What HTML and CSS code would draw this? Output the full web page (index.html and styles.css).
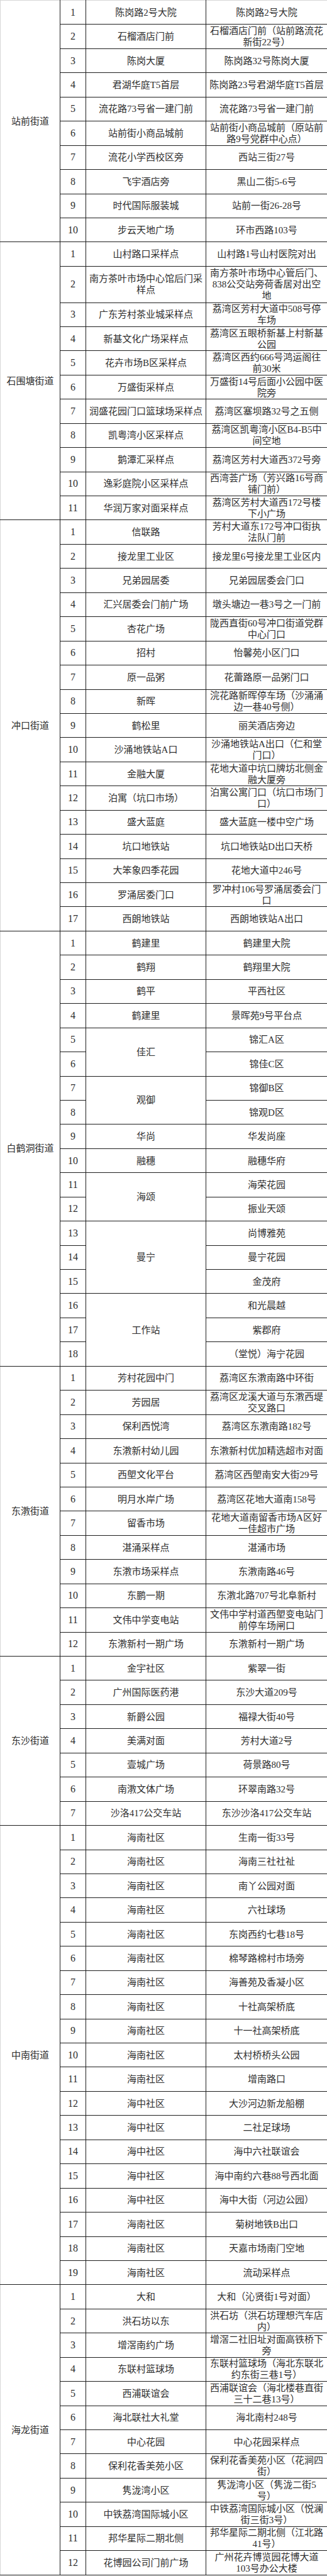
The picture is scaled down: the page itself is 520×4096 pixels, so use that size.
FILE: index.html
```html
<!DOCTYPE html>
<html lang="zh-CN">
<head>
<meta charset="utf-8">
<title>核酸采样点</title>
<link rel="stylesheet" href="styles.css">
</head>
<body>
<table class="sites">
<colgroup><col class="c-street"><col class="c-no"><col class="c-name"><col class="c-addr"></colgroup>
<tbody>
<tr class="first"><td class="street" rowspan="10">站前街道</td><td class="no">1</td><td>陈岗路2号大院</td><td>陈岗路2号大院</td></tr>
<tr><td class="no">2</td><td>石榴酒店门前</td><td>石榴酒店门前（站前路流花<br>新街22号）</td></tr>
<tr><td class="no">3</td><td>陈岗大厦</td><td>陈岗路32号陈岗大厦</td></tr>
<tr><td class="no">4</td><td>君湖华庭T5首层</td><td>陈岗路23号君湖华庭T5首层</td></tr>
<tr><td class="no">5</td><td>流花路73号省一建门前</td><td>流花路73号省一建门前</td></tr>
<tr><td class="no">6</td><td>站前街小商品城前</td><td>站前街小商品城前（原站前<br>路9号党群中心点）</td></tr>
<tr><td class="no">7</td><td>流花小学西校区旁</td><td>西站三街27号</td></tr>
<tr><td class="no">8</td><td>飞宇酒店旁</td><td>黑山二街5-6号</td></tr>
<tr><td class="no">9</td><td>时代国际服装城</td><td>站前一街26-28号</td></tr>
<tr><td class="no">10</td><td>步云天地广场</td><td>环市西路103号</td></tr>

<tr><td class="street" rowspan="11">石围塘街道</td><td class="no">1</td><td>山村路口采样点</td><td>山村路1号山村医院对出</td></tr>
<tr class="tall"><td class="no">2</td><td>南方茶叶市场中心馆后门采<br>样点</td><td>南方茶叶市场中心管后门、<br>838公交站旁荷香居对出空<br>地</td></tr>
<tr><td class="no">3</td><td>广东芳村茶业城采样点</td><td>荔湾区芳村大道中508号停<br>车场</td></tr>
<tr><td class="no">4</td><td>新基文化广场采样点</td><td>荔湾区五眼桥新基上村新基<br>公园</td></tr>
<tr><td class="no">5</td><td>花卉市场B区采样点</td><td>荔湾区西约666号鸿运阁往<br>前30米</td></tr>
<tr><td class="no">6</td><td>万盛街采样点</td><td>万盛街14号后面小公园中医<br>院旁</td></tr>
<tr><td class="no">7</td><td>润盛花园门口篮球场采样点</td><td>荔湾区塞坝路32号之五侧</td></tr>
<tr><td class="no">8</td><td>凯粤湾小区采样点</td><td>荔湾区凯粤湾小区B4-B5中<br>间空地</td></tr>
<tr><td class="no">9</td><td>鹅潭汇采样点</td><td>荔湾区芳村大道西372号旁</td></tr>
<tr><td class="no">10</td><td>逸彩庭院小区采样点</td><td>西湾荟广场（芳兴路16号商<br>铺门前）</td></tr>
<tr><td class="no">11</td><td>华润万家对面采样点</td><td>荔湾区芳村大道西172号楼<br>下小广场</td></tr>

<tr><td class="street" rowspan="17">冲口街道</td><td class="no">1</td><td>信联路</td><td>芳村大道东172号冲口街执<br>法队门前</td></tr>
<tr><td class="no">2</td><td>接龙里工业区</td><td>接龙里6号接龙里工业区内</td></tr>
<tr><td class="no">3</td><td>兄弟园居委</td><td>兄弟园居委会门口</td></tr>
<tr><td class="no">4</td><td>汇兴居委会门前广场</td><td>墩头塘边一巷3号之一门前</td></tr>
<tr><td class="no">5</td><td>杏花广场</td><td>陇西直街60号冲口街道党群<br>中心门口</td></tr>
<tr><td class="no">6</td><td>招村</td><td>怡馨苑小区门口</td></tr>
<tr><td class="no">7</td><td>原一品粥</td><td>花蕾路原一品粥门口</td></tr>
<tr><td class="no">8</td><td>新晖</td><td>浣花路新晖停车场（沙涌涌<br>边一巷40号侧）</td></tr>
<tr><td class="no">9</td><td>鹤松里</td><td>丽芙酒店旁边</td></tr>
<tr><td class="no">10</td><td>沙涌地铁站A口</td><td>沙涌地铁站A出口（仁和堂<br>门口）</td></tr>
<tr><td class="no">11</td><td>金融大厦</td><td>花地大道中坑口牌坊北侧金<br>融大厦旁</td></tr>
<tr><td class="no">12</td><td>泊寓（坑口市场）</td><td>泊寓公寓门口（坑口市场门<br>口）</td></tr>
<tr><td class="no">13</td><td>盛大蓝庭</td><td>盛大蓝庭一楼中空广场</td></tr>
<tr><td class="no">14</td><td>坑口地铁站</td><td>坑口地铁站D出口天桥</td></tr>
<tr><td class="no">15</td><td>大笨象四季花园</td><td>花地大道中246号</td></tr>
<tr><td class="no">16</td><td>罗涌居委门口</td><td>罗冲村106号罗涌居委会门<br>口</td></tr>
<tr><td class="no">17</td><td>西朗地铁站</td><td>西朗地铁站A出口</td></tr>

<tr><td class="street" rowspan="18">白鹤洞街道</td><td class="no">1</td><td>鹤建里</td><td>鹤建里大院</td></tr>
<tr><td class="no">2</td><td>鹤翔</td><td>鹤翔里大院</td></tr>
<tr><td class="no">3</td><td>鹤平</td><td>平西社区</td></tr>
<tr><td class="no">4</td><td>鹤建里</td><td>景晖苑9号平台点</td></tr>
<tr><td class="no">5</td><td rowspan="2">佳汇</td><td>锦汇A区</td></tr>
<tr><td class="no">6</td><td>锦佳C区</td></tr>
<tr><td class="no">7</td><td rowspan="2">观御</td><td>锦御B区</td></tr>
<tr><td class="no">8</td><td>锦观D区</td></tr>
<tr><td class="no">9</td><td>华尚</td><td>华发尚座</td></tr>
<tr><td class="no">10</td><td>融穗</td><td>融穗华府</td></tr>
<tr><td class="no">11</td><td rowspan="2">海颂</td><td>海荣花园</td></tr>
<tr><td class="no">12</td><td>振业天颂</td></tr>
<tr><td class="no">13</td><td rowspan="3">曼宁</td><td>尚博雅苑</td></tr>
<tr><td class="no">14</td><td>曼宁花园</td></tr>
<tr><td class="no">15</td><td>金茂府</td></tr>
<tr><td class="no">16</td><td rowspan="3">工作站</td><td>和光晨越</td></tr>
<tr><td class="no">17</td><td>紫郡府</td></tr>
<tr><td class="no">18</td><td>（堂悦）海宁花园</td></tr>

<tr><td class="street" rowspan="12">东漖街道</td><td class="no">1</td><td>芳村花园中门</td><td>荔湾区东漖南路中环街</td></tr>
<tr><td class="no">2</td><td>芳园居</td><td>荔湾区龙溪大道与东漖西堤<br>交叉路口</td></tr>
<tr><td class="no">3</td><td>保利西悦湾</td><td>荔湾区东漖南路182号</td></tr>
<tr><td class="no">4</td><td>东漖新村幼儿园</td><td>东漖新村优加精选超市对面</td></tr>
<tr><td class="no">5</td><td>西塱文化平台</td><td>荔湾区西塱南安大街29号</td></tr>
<tr><td class="no">6</td><td>明月水岸广场</td><td>荔湾区花地大道南158号</td></tr>
<tr><td class="no">7</td><td>留香市场</td><td>花地大道南留香市场A区好<br>一佳超市广场</td></tr>
<tr><td class="no">8</td><td>湛涌采样点</td><td>湛涌市场</td></tr>
<tr><td class="no">9</td><td>东漖市场采样点</td><td>东漖南路46号</td></tr>
<tr><td class="no">10</td><td>东鹏一期</td><td>东漖北路707号北阜新村</td></tr>
<tr><td class="no">11</td><td>文伟中学变电站</td><td>文伟中学村道西塱变电站门<br>前停车场闸口</td></tr>
<tr><td class="no">12</td><td>东漖新村一期广场</td><td>东漖新村一期广场</td></tr>

<tr><td class="street" rowspan="7">东沙街道</td><td class="no">1</td><td>金宇社区</td><td>紫翠一街</td></tr>
<tr><td class="no">2</td><td>广州国际医药港</td><td>东沙大道209号</td></tr>
<tr><td class="no">3</td><td>新爵公园</td><td>福禄大街40号</td></tr>
<tr><td class="no">4</td><td>美满对面</td><td>芳村大道2号</td></tr>
<tr><td class="no">5</td><td>壹城广场</td><td>荷景路80号</td></tr>
<tr><td class="no">6</td><td>南漖文体广场</td><td>环翠南路32号</td></tr>
<tr><td class="no">7</td><td>沙洛417公交车站</td><td>东沙沙洛417公交车站</td></tr>

<tr><td class="street" rowspan="19">中南街道</td><td class="no">1</td><td>海南社区</td><td>生南一街33号</td></tr>
<tr><td class="no">2</td><td>海南社区</td><td>海南三社社祉</td></tr>
<tr><td class="no">3</td><td>海南社区</td><td>南丫公园对面</td></tr>
<tr><td class="no">4</td><td>海南社区</td><td>六社球场</td></tr>
<tr><td class="no">5</td><td>海南社区</td><td>东岗西约七巷18号</td></tr>
<tr><td class="no">6</td><td>海南社区</td><td>棉琴路棉村市场旁</td></tr>
<tr><td class="no">7</td><td>海南社区</td><td>海善苑及香凝小区</td></tr>
<tr><td class="no">8</td><td>海南社区</td><td>十社高架桥底</td></tr>
<tr><td class="no">9</td><td>海南社区</td><td>十一社高架桥底</td></tr>
<tr><td class="no">10</td><td>海南社区</td><td>太村桥桥头公园</td></tr>
<tr><td class="no">11</td><td>海南社区</td><td>增南路口</td></tr>
<tr><td class="no">12</td><td>海中社区</td><td>大沙河边新龙船棚</td></tr>
<tr><td class="no">13</td><td>海中社区</td><td>二社足球场</td></tr>
<tr><td class="no">14</td><td>海中社区</td><td>海中六社联谊会</td></tr>
<tr><td class="no">15</td><td>海中社区</td><td>海中南约六巷88号西北面</td></tr>
<tr><td class="no">16</td><td>海中社区</td><td>海中大街（河边公园）</td></tr>
<tr><td class="no">17</td><td>海南社区</td><td>菊树地铁B出口</td></tr>
<tr><td class="no">18</td><td>海南社区</td><td>天嘉市场南门空地</td></tr>
<tr><td class="no">19</td><td>海南社区</td><td>流动采样点</td></tr>

<tr><td class="street" rowspan="12">海龙街道</td><td class="no">1</td><td>大和</td><td>大和（沁贤街1号对面）</td></tr>
<tr><td class="no">2</td><td>洪石坊以东</td><td>洪石坊（洪石坊理想汽车店<br>内）</td></tr>
<tr><td class="no">3</td><td>增滘南约广场</td><td>增滘二社旧址对面高铁桥下<br>旁</td></tr>
<tr><td class="no">4</td><td>东联村篮球场</td><td>东联村篮球场（海北东联北<br>约东街三巷1号）</td></tr>
<tr><td class="no">5</td><td>西浦联谊会</td><td>西浦联谊会（海北楼巷直街<br>三十二巷13号）</td></tr>
<tr><td class="no">6</td><td>海北联社大礼堂</td><td>海北南村248号</td></tr>
<tr><td class="no">7</td><td>中心花园</td><td>中心花园采样点</td></tr>
<tr><td class="no">8</td><td>保利花香美苑小区</td><td>保利花香美苑小区（花涧四<br>街）</td></tr>
<tr><td class="no">9</td><td>隽泷湾小区</td><td>隽泷湾小区（隽泷二街5<br>号）</td></tr>
<tr><td class="no">10</td><td>中铁荔湾国际城小区</td><td>中铁荔湾国际城小区（悦澜<br>街三街3号）</td></tr>
<tr><td class="no">11</td><td>邦华星际二期北侧</td><td>邦华星际二期北侧（江北路<br>41号）</td></tr>
<tr><td class="no">12</td><td>花博园公司门前广场</td><td>广州花卉博览园花博大道<br>103号办公大楼</td></tr>
</tbody>
</table>
</body>
</html>
```

FILE: styles.css
```css
html, body {
  margin: 0;
  padding: 0;
  background: #ffffff;
}

.sites {
  border-collapse: collapse;
  table-layout: fixed;
  width: 520px;
  font-family: "Liberation Serif", "Noto Sans CJK SC", serif;
  color: #2e2e2e;
}

.c-street { width: 95px; }
.c-no { width: 41px; }
.c-name { width: 191px; }
.c-addr { width: 193px; }

.sites tr { height: 38.45px; }
.sites tr.tall { height: 57.7px; }

.sites td {
  border: 1px solid #1e1e1e;
  padding: 0 2px;
  text-align: center;
  vertical-align: middle;
  font-size: 15px;
  line-height: 18px;
  white-space: nowrap;
  overflow: hidden;
}

.sites td.street {
  border-left-color: #d6d6d6;
}

.sites tr.first td {
  border-top-color: #d6d6d6;
}

.sites td.no {
  font-size: 16px;
  padding: 0;
}
```
